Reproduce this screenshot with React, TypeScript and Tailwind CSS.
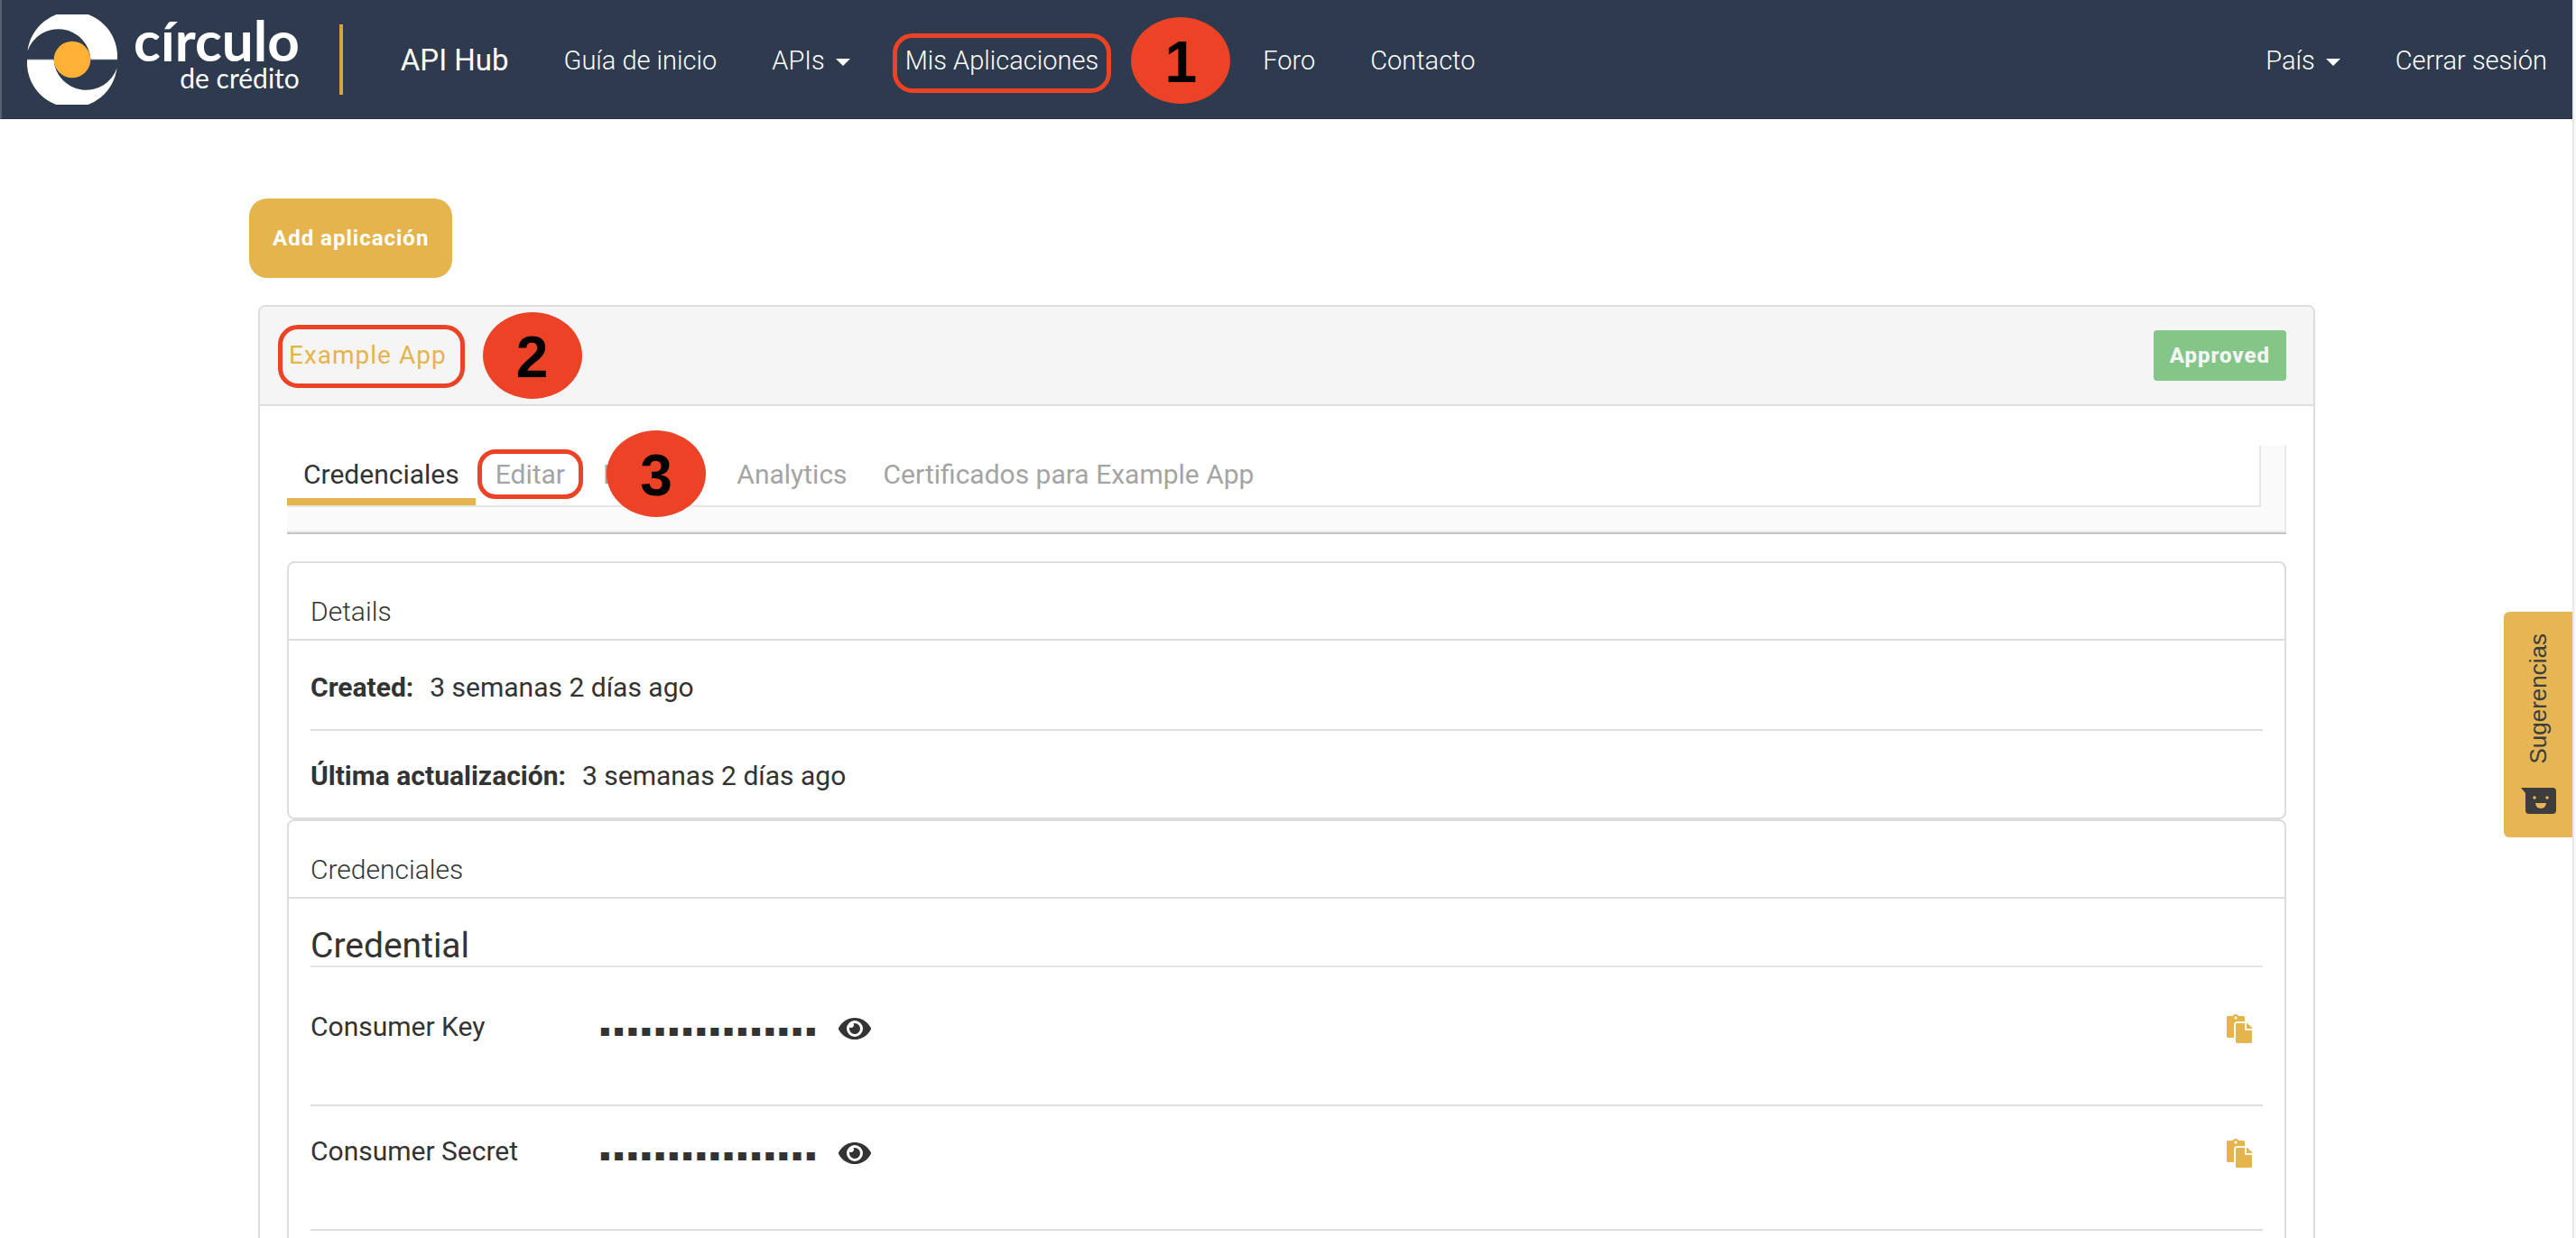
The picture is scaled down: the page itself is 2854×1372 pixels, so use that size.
import type { ReactNode } from "react";
import { FaEye, FaPaste } from "react-icons/fa";

function LogoMark() {
  const blade = "M0.5 40.5 A50 50 0 0 1 100 50 H70.5 A36 36 0 0 0 0.5 40.5Z";
  return (
    <svg viewBox="0 0 100 100" className="size-[100px] shrink-0" aria-hidden="true">
      <path d={blade} fill="#fff" />
      <path d={blade} fill="#fff" transform="rotate(180 50 50)" />
      <path d="M0 50H100" stroke="#8d95a1" strokeWidth="0.8" />
      <circle cx="50" cy="50" r="20.3" fill="#ffb036" />
    </svg>
  );
}

function Caret() {
  return (
    <svg viewBox="0 0 16 8" className="mt-1 h-2 w-4" aria-hidden="true">
      <path d="M0 0H16L8 8Z" fill="currentColor" />
    </svg>
  );
}

function Step({ n }: { n: number }) {
  return (
    <span className="flex h-[96px] w-[110px] shrink-0 items-center justify-center rounded-[50%] bg-[#ec4226] pt-1 font-['Liberation_Sans',sans-serif] text-[64px] leading-[64px] font-bold tracking-normal text-black">
      {n}
    </span>
  );
}

function NavLink({ children }: { children: ReactNode }) {
  return (
    <a href="#" className="whitespace-nowrap">
      {children}
    </a>
  );
}

function NavMenu({ label }: { label: string }) {
  return (
    <button type="button" className="flex items-center gap-3 whitespace-nowrap">
      {label}
      <Caret />
    </button>
  );
}

function Header() {
  return (
    <header className="flex h-[132px] items-center border-b border-l-2 border-b-[#2f2f4b] border-l-[#596273] bg-[#2e3a4d] pr-7 pl-7 text-white">
      <a href="#" className="flex items-center" aria-label="círculo de crédito">
        <LogoMark />
        <span className="ml-[18px] flex flex-col items-end pb-4 font-['Lato',sans-serif]">
          <span className="text-[62px] leading-[56px] font-bold">círculo</span>
          <span className="text-[30px] leading-[28px]">de crédito</span>
        </span>
      </a>
      <span className="ml-11 h-[78px] w-1 bg-[#d9a23b]" />
      <nav className="ml-16 flex grow items-center gap-[61px] pt-[3px] text-[29px] leading-[40px] font-light">
        <a href="#" className="text-[33px] font-normal whitespace-nowrap">
          API Hub
        </a>
        <NavLink>Guía de inicio</NavLink>
        <NavMenu label="APIs" />
        <a href="#" className="relative whitespace-nowrap">
          Mis Aplicaciones
          <span className="absolute -inset-x-[14px] -top-[10px] -bottom-4 rounded-[22px] border-[5px] border-[#ec4226]" />
        </a>
        <span className="flex h-10 w-[60px] items-center justify-center">
          <Step n={1} />
        </span>
        <NavLink>Foro</NavLink>
        <NavLink>Contacto</NavLink>
        <span className="grow" />
        <NavMenu label="País" />
        <NavLink>Cerrar sesión</NavLink>
      </nav>
    </header>
  );
}

function Tabs() {
  return (
    <div className="border-b-2 border-[#c4c4c4]">
      <div className="border-r-2 border-b-2 border-[#ebebeb] bg-[#fafafa] pr-[26px] pb-[26px]">
        <div
          role="tablist"
          className="flex gap-[2px] border-r-2 border-b-2 border-[#e6e6e6] bg-white text-[#a4a4a4]"
        >
          <button
            role="tab"
            aria-selected="true"
            className="border-b-8 border-[#e5b44d] px-[18px] pt-3 pb-[6px] text-[#333]"
          >
            Credenciales
          </button>
          <button role="tab" aria-selected="false" className="relative px-5 pt-3 pb-[14px]">
            Editar
            <span className="absolute inset-x-0 top-1 h-[55px] rounded-[20px] border-[5px] border-[#ec4226]" />
          </button>
          <button role="tab" aria-selected="false" className="relative px-5 pt-3 pb-[14px]">
            Eliminar
            <span className="absolute -top-[17px] left-6">
              <Step n={3} />
            </span>
          </button>
          <button role="tab" aria-selected="false" className="px-[18px] pt-3 pb-[14px]">
            Analytics
          </button>
          <button role="tab" aria-selected="false" className="px-5 pt-3 pb-[14px]">
            Certificados para Example App
          </button>
        </div>
      </div>
    </div>
  );
}

function Panel({ title, children }: { title: string; children: ReactNode }) {
  return (
    <section className="rounded-lg border-2 border-[#ddd]">
      <h2 className="border-b-2 border-[#ddd] px-6 pt-[34px] pb-[10px] font-light">{title}</h2>
      <div className="px-6">{children}</div>
    </section>
  );
}

function Detail({ label, value }: { label: string; value: string }) {
  return (
    <div className="flex gap-[18px] border-b-2 border-[#ddd] pt-[30px] pb-[26px] last:border-b-0">
      <dt className="font-bold">{label}</dt>
      <dd>{value}</dd>
    </div>
  );
}

function Secret({ label }: { label: string }) {
  return (
    <div className="flex h-[138px] items-start border-b-2 border-[#ddd] pt-[30px]">
      <span className="w-[320px]">{label}</span>
      <span className="pt-1 font-['DejaVu_Sans',sans-serif] text-[18px] tracking-[3px]">
        {"▪".repeat(16)}
      </span>
      <button type="button" aria-label={`Mostrar ${label}`} className="ml-[22px] pt-[6px]">
        <FaEye className="h-8 w-9" />
      </button>
      <button
        type="button"
        aria-label={`Copiar ${label}`}
        className="mr-3 ml-auto pt-[6px] text-[#e5b44d]"
      >
        <FaPaste className="h-8 w-7" />
      </button>
    </div>
  );
}

function Feedback() {
  return (
    <button
      type="button"
      className="fixed top-[678px] right-1 flex h-[250px] w-[76px] flex-col items-center gap-[26px] rounded-l-md bg-[#e5b653] pt-6 text-[#3d3d3d]"
    >
      <span className="rotate-180 font-['Liberation_Sans',sans-serif] text-[26px] leading-[32px] [writing-mode:vertical-rl]">
        Sugerencias
      </span>
      <svg viewBox="0 0 39 29" className="h-[29px] w-[39px]" aria-hidden="true">
        <path d="M0 0H35Q39 0 39 4V25Q39 29 35 29H9Q5 29 5 25V6Z" fill="currentColor" />
        <circle cx="15" cy="11" r="1.8" fill="#e5b653" />
        <circle cx="29" cy="11" r="1.8" fill="#e5b653" />
        <path d="M16 17H28A6 6 0 0 1 16 17Z" fill="#e5b653" />
      </svg>
    </button>
  );
}

export default function App() {
  return (
    <div className="flex h-screen overflow-hidden bg-[#fafafa] pr-[2px] font-['Roboto',sans-serif] text-[30px] leading-[40px] text-[#333]">
      <div className="min-w-0 grow border-r-2 border-[#e8e8e8] bg-white">
        <Header />
        <main className="ml-[10%] w-4/5 pt-[88px] pl-px">
          <button
            type="button"
            className="-ml-[10px] h-[88px] rounded-[20px] bg-[#e5b44d] px-[26px] text-[24px] font-bold tracking-[1px] text-white"
          >
            Add aplicación
          </button>
          <article className="mt-[30px] rounded-lg border-2 border-[#ddd]">
            <header className="flex h-[110px] items-center justify-between rounded-t-md border-b-2 border-[#ddd] bg-[#f5f5f5] pr-[30px] pl-8">
              <div className="flex items-center gap-10">
                <a href="#" className="relative text-[28px] tracking-[1px] text-[#e5b44d]">
                  Example App
                  <span className="absolute -top-[14px] -right-5 -bottom-4 -left-3 rounded-[22px] border-[5px] border-[#ec4226]" />
                </a>
                <Step n={2} />
              </div>
              <span className="rounded-sm bg-[#84c588] px-[18px] py-2 text-[24px] font-extrabold tracking-[1px] text-[#f5f5f5]">
                Approved
              </span>
            </header>
            <div className="px-[30px] pt-11 pb-[30px]">
              <Tabs />
              <div className="mt-[30px]">
                <Panel title="Details">
                  <dl className="pt-[2px]">
                    <Detail label="Created:" value="3 semanas 2 días ago" />
                    <Detail label="Última actualización:" value="3 semanas 2 días ago" />
                  </dl>
                </Panel>
                <Panel title="Credenciales">
                  <div className="pb-12">
                    <h3 className="mb-4 border-b-2 border-[#e4e4e4] pt-[30px] text-[39px] leading-[44px]">
                      Credential
                    </h3>
                    <Secret label="Consumer Key" />
                    <Secret label="Consumer Secret" />
                  </div>
                </Panel>
              </div>
            </div>
          </article>
        </main>
      </div>
      <Feedback />
    </div>
  );
}
